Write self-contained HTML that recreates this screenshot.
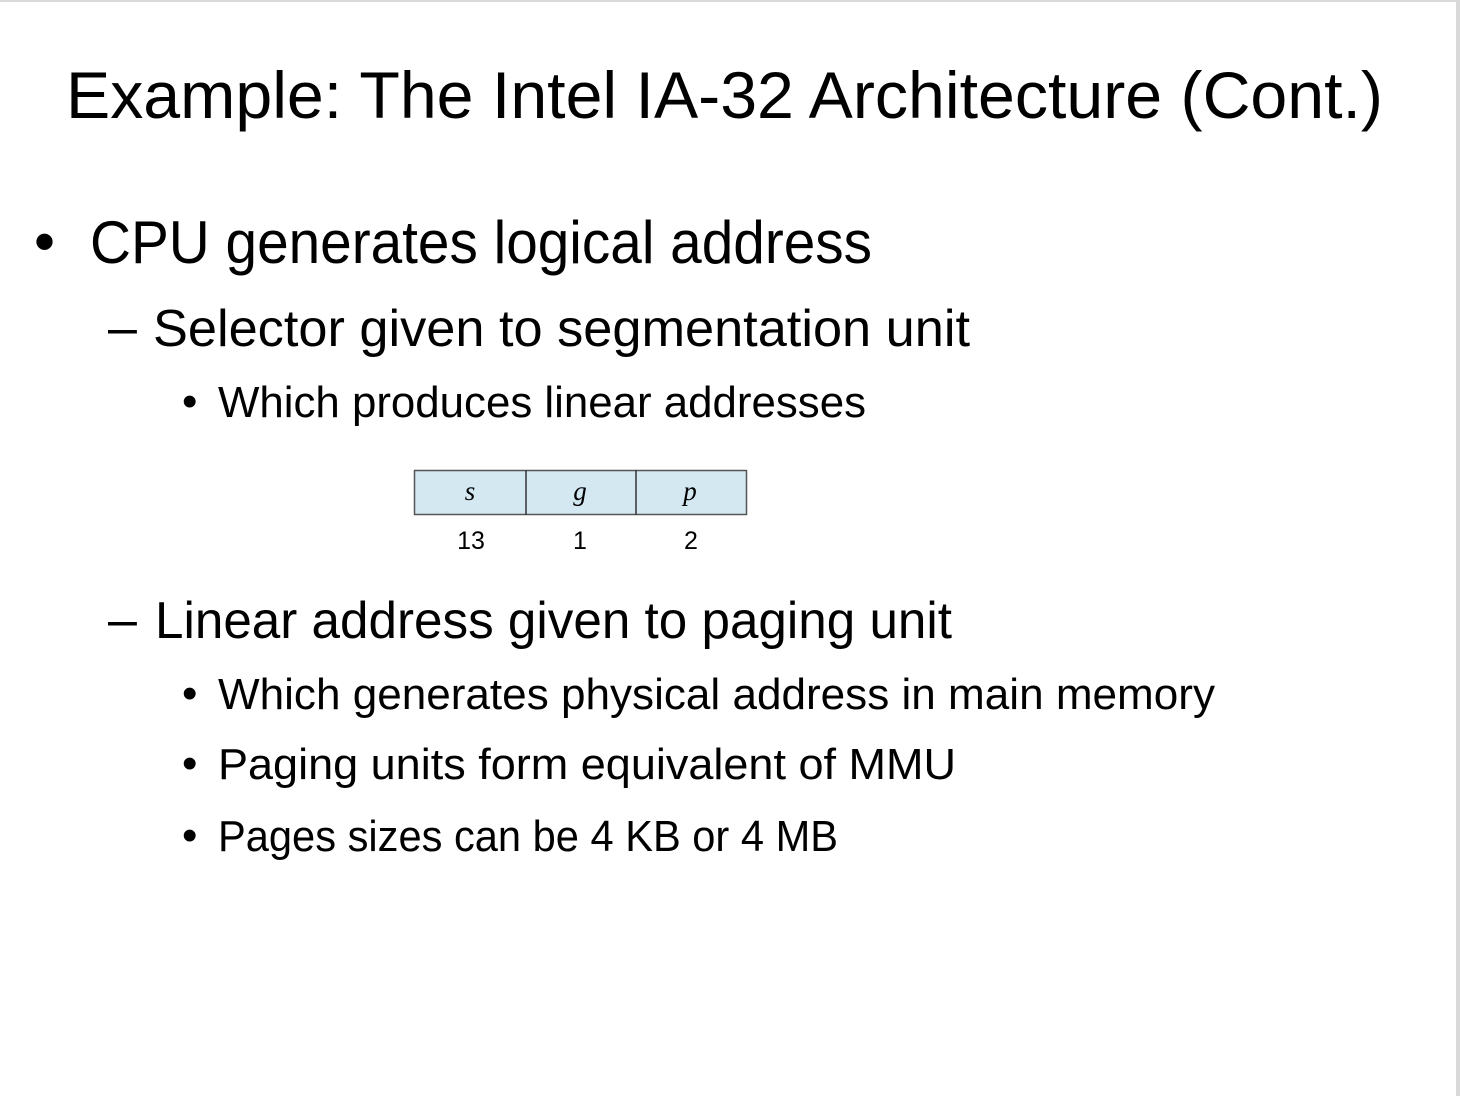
<!DOCTYPE html>
<html><head><meta charset="utf-8"><style>
html,body{margin:0;padding:0;background:#fff;}
body{width:1460px;height:1096px;position:relative;overflow:hidden;font-family:"Liberation Sans",sans-serif;color:#000;}
.t{position:absolute;white-space:nowrap;transform-origin:0 0;line-height:1;}
#topb{position:absolute;left:0;top:0;width:1460px;height:2px;background:#d9d9d9;}
#rb{position:absolute;left:1456px;top:0;width:4px;height:1096px;background:#d9d9d9;}
</style></head><body>
<div id="topb"></div><div id="rb"></div>
<div class="t f" style="left:66px;top:62px;font-size:66px">Example: The Intel IA-32 Architecture (Cont.)</div>
<div class="t" style="left:34px;top:212px;font-size:60px">•</div>
<div class="t f" style="left:90px;top:213px;font-size:60px">CPU generates logical address</div>
<div class="t" style="left:108px;top:302px;font-size:52px">–</div>
<div class="t f" style="left:153px;top:303px;font-size:52px">Selector given to segmentation unit</div>
<div class="t" style="left:182px;top:380px;font-size:44px">•</div>
<div class="t f" style="left:218px;top:381px;font-size:44px">Which produces linear addresses</div>
<svg style="position:absolute;left:410px;top:466px" width="345" height="92">
<rect x="4.5" y="4.5" width="332" height="44" fill="#d3e8f1" stroke="#555" stroke-width="1.5"/>
<line x1="116" y1="4" x2="116" y2="49" stroke="#333" stroke-width="1.5"/>
<line x1="226" y1="4" x2="226" y2="49" stroke="#333" stroke-width="1.5"/>
<text x="60" y="34" font-family="Liberation Serif" font-style="italic" font-size="27" text-anchor="middle">s</text>
<text x="170" y="34" font-family="Liberation Serif" font-style="italic" font-size="27" text-anchor="middle">g</text>
<text x="280" y="34" font-family="Liberation Serif" font-style="italic" font-size="27" text-anchor="middle">p</text>
<text x="61" y="83" font-family="Liberation Sans" font-size="25" text-anchor="middle">13</text>
<text x="170" y="83" font-family="Liberation Sans" font-size="25" text-anchor="middle">1</text>
<text x="281" y="83" font-family="Liberation Sans" font-size="25" text-anchor="middle">2</text>
</svg>
<div class="t" style="left:108px;top:594px;font-size:52px">–</div>
<div class="t f" style="left:155px;top:595px;font-size:52px">Linear address given to paging unit</div>
<div class="t" style="left:182px;top:672px;font-size:44px">•</div>
<div class="t f" style="left:218px;top:673px;font-size:44px">Which generates physical address in main memory</div>
<div class="t" style="left:182px;top:742px;font-size:44px">•</div>
<div class="t f" style="left:218px;top:743px;font-size:44px">Paging units form equivalent of MMU</div>
<div class="t" style="left:182px;top:814px;font-size:44px">•</div>
<div class="t f" style="left:218px;top:815px;font-size:44px">Pages sizes can be 4 KB or 4 MB</div>
<script>
var W=[1317,782,817,648,797,997,738,620];
var els=document.querySelectorAll('.f');
for(var i=0;i<els.length;i++){var w=els[i].getBoundingClientRect().width;els[i].style.transform='scaleX('+(W[i]/w)+')';}
</script>
</body></html>
